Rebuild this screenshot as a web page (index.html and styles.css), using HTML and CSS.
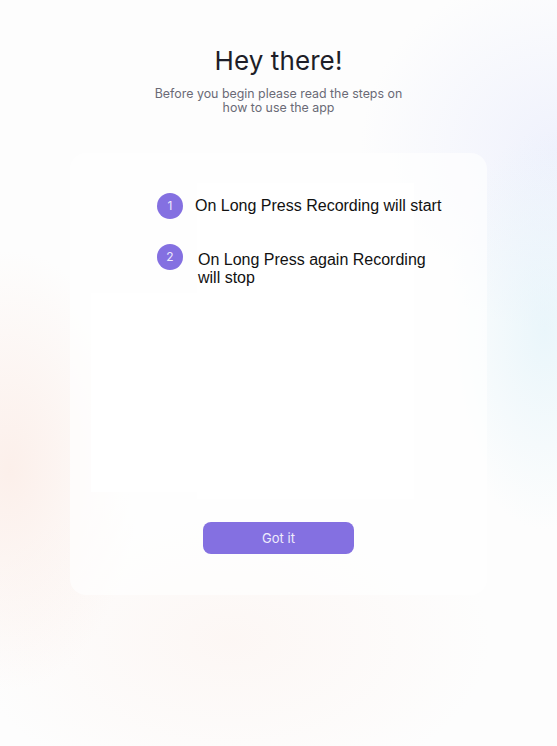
FILE: index.html
```html
<!DOCTYPE html>
<html lang="en">
<head>
<meta charset="utf-8">
<title>Hey there!</title>
<link rel="stylesheet" href="styles.css">
</head>
<body>
<main class="screen">
  <header class="intro">
    <h1 class="title">Hey there!</h1>
    <p class="subtitle">Before you begin please read the steps on how to use the app</p>
  </header>
  <section class="card">
    <div class="stage">
      <div class="art">
        <div class="panel panel-small"></div>
        <div class="panel panel-large"></div>
      </div>
      <ol class="steps">
        <li class="step step-first">
          <span class="badge">1</span>
          <span class="step-text">On Long Press Recording will start</span>
        </li>
        <li class="step step-second">
          <span class="badge">2</span>
          <span class="step-text">On Long Press again Recording will stop</span>
        </li>
      </ol>
    </div>
    <button class="cta" type="button">Got it</button>
  </section>
</main>
</body>
</html>
```

FILE: styles.css
```css
* { box-sizing: border-box; }

html, body {
  margin: 0;
  padding: 0;
}

body {
  width: 557px;
  min-height: 746px;
  font-family: Inter, "Noto Sans", sans-serif;
  background-color: #fdfdfd;
  background-image:
    radial-gradient(ellipse 130px 220px at 10px 470px, rgba(251, 226, 216, 0.5), rgba(251, 226, 216, 0) 100%),
    radial-gradient(ellipse 260px 160px at 230px 640px, rgba(252, 238, 232, 0.4), rgba(252, 238, 232, 0) 100%),
    radial-gradient(ellipse 100px 200px at 545px 330px, rgba(218, 240, 249, 0.55), rgba(218, 240, 249, 0) 100%),
    radial-gradient(ellipse 200px 180px at 560px 150px, rgba(230, 234, 252, 0.6), rgba(230, 234, 252, 0) 100%);
}

.screen {
  display: flex;
  flex-direction: column;
  align-items: center;
  padding-top: 45px;
}

.intro {
  display: flex;
  flex-direction: column;
  align-items: center;
  text-align: center;
}

.title {
  margin: 0;
  font-size: 26px;
  line-height: 32px;
  font-weight: 400;
  color: #1e1e28;
  letter-spacing: 0.1px;
}

.subtitle {
  margin: 10px 0 0;
  width: 262px;
  font-size: 12.4px;
  line-height: 14px;
  color: #6a6a76;
}

.card {
  margin-top: 38px;
  width: 417px;
  height: 442px;
  border-radius: 16px;
  background: rgba(255, 255, 255, 0.62);
  padding-top: 30px;
  display: flex;
  flex-direction: column;
  align-items: stretch;
}

.stage {
  display: grid;
}

.art,
.steps {
  grid-area: 1 / 1;
}

.art {
  display: flex;
  align-items: flex-end;
  padding-left: 21px;
}

.panel {
  background: #ffffff;
}

.panel-small {
  width: 106px;
  height: 199px;
  margin-bottom: 7px;
}

.panel-large {
  width: 217px;
  height: 316px;
}

.steps {
  list-style: none;
  margin: 10px 0 0 87px;
  padding: 0;
  width: 292px;
  align-self: start;
  display: flex;
  flex-direction: column;
  gap: 25px;
}

.step {
  display: flex;
  align-items: flex-start;
  font-family: "Liberation Sans", Arial, sans-serif;
  font-size: 16px;
  line-height: 18.4px;
  color: #111111;
}

.badge {
  flex: none;
  width: 26px;
  height: 26px;
  border-radius: 50%;
  background: #8470e1;
  color: #eeeafd;
  font-family: Inter, "Noto Sans", sans-serif;
  font-size: 12px;
  display: flex;
  align-items: center;
  justify-content: center;
}

.step-text {
  flex: 1;
}

.step-first .step-text {
  margin-left: 12px;
  padding-top: 4px;
}

.step-second .step-text {
  margin-left: 15px;
  padding-top: 7px;
}

.cta {
  align-self: center;
  margin-top: 23px;
  width: 151px;
  height: 32px;
  border: 0;
  border-radius: 8px;
  background: #8470e1;
  color: #efecfc;
  font-family: Inter, "Noto Sans", sans-serif;
  font-size: 13px;
  padding: 0;
  cursor: pointer;
}
```
